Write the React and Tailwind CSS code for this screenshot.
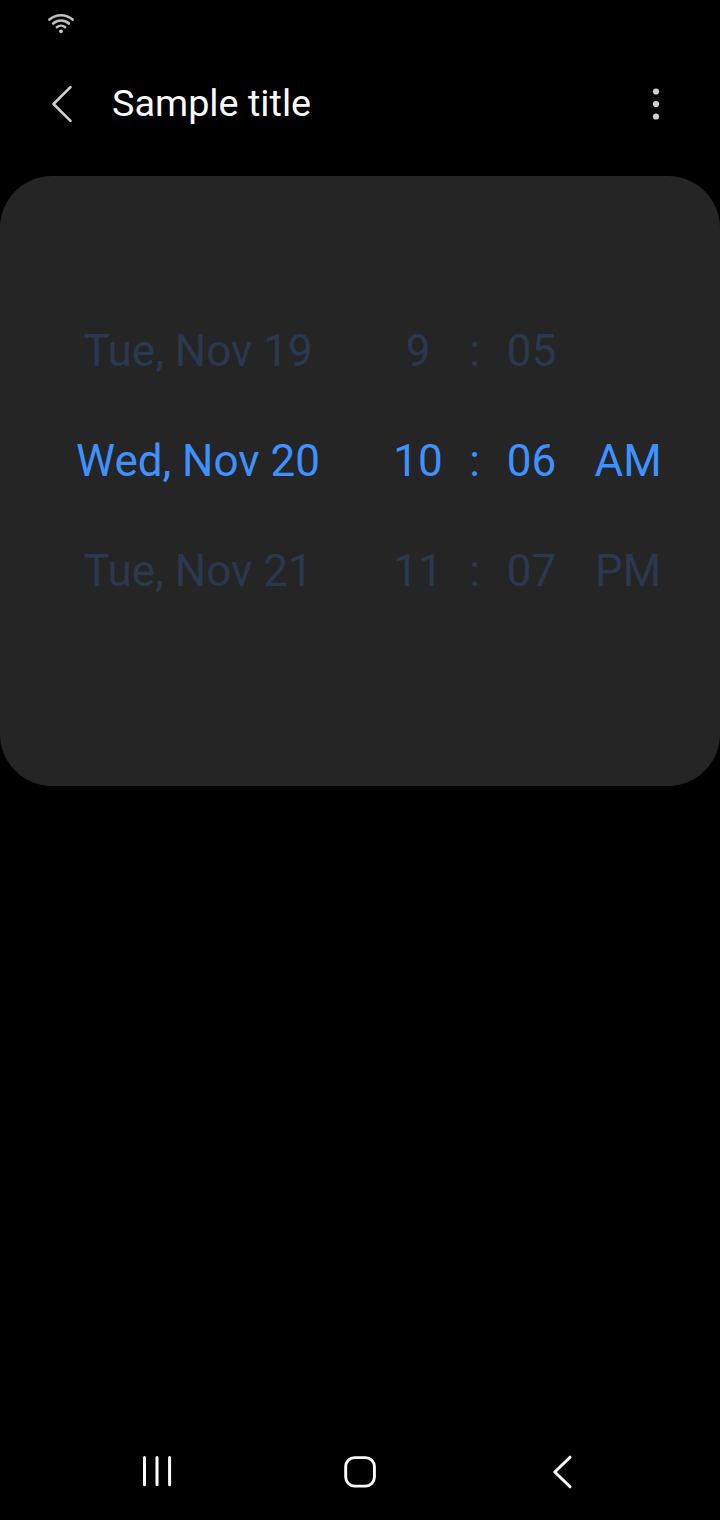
const rows = [
  { date: "Tue, Nov 19", hour: "9", minute: "05", period: "" },
  { date: "Wed, Nov 20", hour: "10", minute: "06", period: "AM", selected: true },
  { date: "Tue, Nov 21", hour: "11", minute: "07", period: "PM" },
];

function StatusBar() {
  return (
    <div className="h-12 pl-[46px] pt-[10px]">
      <svg width="30" height="26" viewBox="0 0 30 26" fill="none" stroke="#c0c0c0" strokeWidth="2.6" strokeLinecap="round">
        <path d="M3.4 9.6C10 3.8 20 3.8 26.6 9.6" />
        <path d="M7.1 13.5C11.6 9.5 18.4 9.5 22.9 13.5" />
        <path d="M10.9 17.2C13.3 15.2 16.7 15.2 19.1 17.2" />
        <circle cx="15" cy="21.3" r="1.9" fill="#c8c8c8" stroke="none" />
      </svg>
    </div>
  );
}

function AppBar() {
  return (
    <header className="flex h-32 items-start pt-8">
      <button className="ml-11 h-12 w-[68px]" aria-label="Back">
        <svg width="36" height="48" viewBox="0 0 36 48" fill="none" stroke="#d0d0d0" strokeWidth="2.6" strokeLinecap="round" strokeLinejoin="round">
          <path d="M26.5 7.2L9.5 24L26.5 40.8" />
        </svg>
      </button>
      <h1 className="h-12 text-[37.8px] leading-[47px] text-[#fafafa]">Sample title</h1>
      <button className="ml-auto mr-10 h-12 w-12" aria-label="More options">
        <svg width="48" height="48" viewBox="0 0 48 48" fill="#d0d0d0">
          <circle cx="24" cy="11.5" r="3.1" />
          <circle cx="24" cy="24" r="3.1" />
          <circle cx="24" cy="36.5" r="3.1" />
        </svg>
      </button>
    </header>
  );
}

function PickerRow({ date, hour, minute, period, selected }) {
  return (
    <div
      className={
        "grid h-[110px] grid-cols-[300px_99px_55px_59px_134px] items-center justify-start pl-12 text-center text-[44px] leading-none whitespace-nowrap " +
        (selected ? "text-[#3e91ff]" : "text-[#2a394f]")
      }
    >
      <span>{date}</span>
      <span className="pl-[41px]">{hour}</span>
      <span>:</span>
      <span>{minute}</span>
      <span>{period}</span>
    </div>
  );
}

function NavigationBar() {
  return (
    <nav className="mt-auto flex h-24 items-center justify-between px-[133px]">
      <svg width="48" height="48" viewBox="0 0 48 48" fill="none" stroke="#fff" strokeWidth="3" strokeLinecap="round">
        <path d="M11.5 9.4V36.8M24 9.4V36.8M36.6 9.4V36.8" />
      </svg>
      <svg width="48" height="48" viewBox="0 0 48 48" fill="none" stroke="#fff" strokeWidth="2.9">
        <rect x="9.7" y="9.6" width="28.7" height="28.5" rx="9" />
      </svg>
      <svg width="48" height="48" viewBox="0 0 48 48" fill="none" stroke="#fff" strokeWidth="3" strokeLinecap="round" strokeLinejoin="round">
        <path d="M31 9.2L15.8 24L31 38.8" />
      </svg>
    </nav>
  );
}

export default function App() {
  return (
    <div className="flex h-[1520px] w-[720px] flex-col bg-black font-['Roboto',sans-serif]">
      <StatusBar />
      <AppBar />
      <main className="h-[610px] rounded-[52px] bg-[#252525] pt-[120px]">
        {rows.map((row) => (
          <PickerRow key={row.date} {...row} />
        ))}
      </main>
      <NavigationBar />
    </div>
  );
}
